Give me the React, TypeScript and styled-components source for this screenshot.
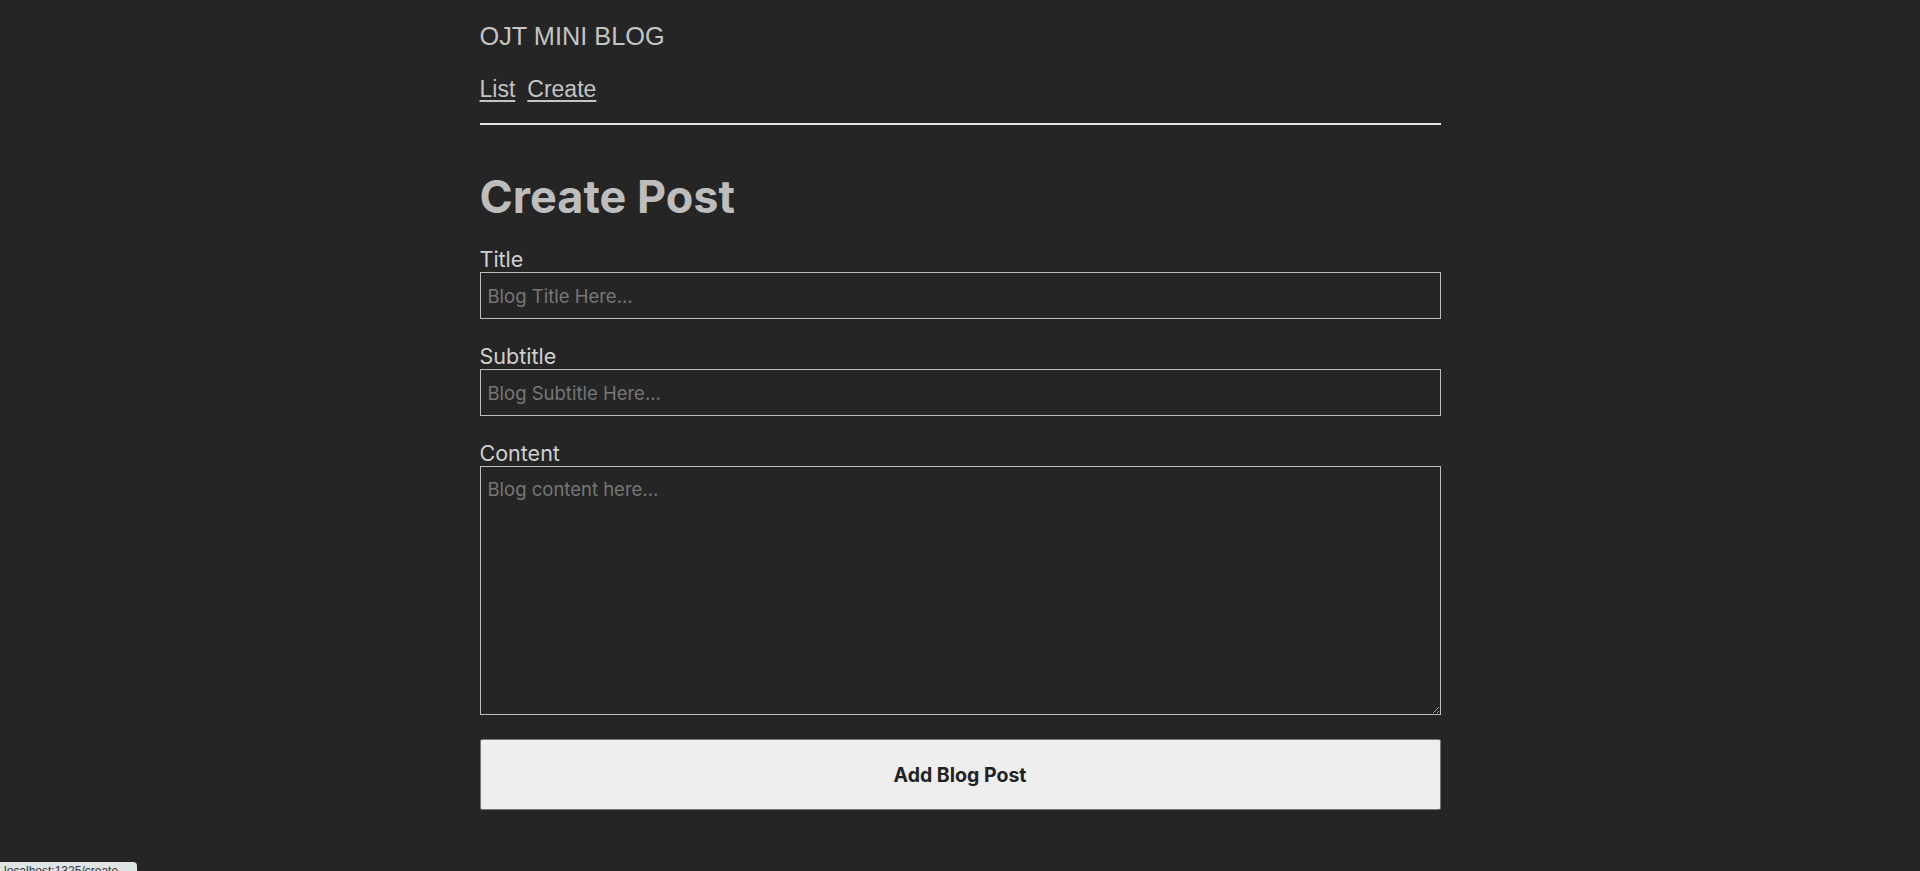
import React from 'react';
import styled, { createGlobalStyle } from 'styled-components';

const GlobalStyle = createGlobalStyle`
  html, body {
    margin: 0;
    padding: 0;
    background: #252525;
    color: #c4c4c4;
    font-family: Inter, "Liberation Sans", sans-serif;
  }
  * { box-sizing: border-box; }
`;

const Page = styled.div`
  width: 961px;
  margin: 0 auto;
  padding-top: 22px;
`;

const Header = styled.header`
  display: flex;
  flex-direction: column;
  border-bottom: 2px solid #e4e4e4;
  padding-bottom: 20px;
`;

const Brand = styled.div`
  font-family: "Liberation Sans", Arial, sans-serif;
  font-size: 25.3px;
  line-height: 29px;
  color: #c4c4c4;
`;

const Nav = styled.nav`
  display: flex;
  gap: 12px;
  margin-top: 25px;
`;

const NavLink = styled.a`
  font-family: "Liberation Sans", Arial, sans-serif;
  font-size: 23px;
  line-height: 27px;
  color: #c4c4c4;
  text-decoration: underline;
  text-underline-offset: 3px;
`;

const Heading = styled.h1`
  font-family: Inter, sans-serif;
  font-weight: 700;
  font-size: 45px;
  line-height: 54px;
  color: #bdbdbd;
  margin: 45px 0 22px;
`;

const Form = styled.form`
  display: flex;
  flex-direction: column;
`;

const Field = styled.div`
  display: flex;
  flex-direction: column;
  margin-bottom: 24px;
`;

const Label = styled.label`
  font-size: 21.5px;
  line-height: 26px;
  color: #d0d0d0;
`;

const inputBase = `
  width: 100%;
  background: transparent;
  border: 1px solid #bdbdbd;
  border-radius: 0;
  color: #d0d0d0;
  font-family: Inter, sans-serif;
  font-size: 18.5px;
  padding: 0 7px;
  outline: none;
  &::placeholder { color: #777777; }
`;

const Input = styled.input`
  ${inputBase}
  height: 47px;
`;

const TextArea = styled.textarea`
  ${inputBase}
  height: 249px;
  padding-top: 11px;
  line-height: 23px;
  resize: vertical;
  display: block;
`;

const Submit = styled.button`
  height: 71px;
  width: 100%;
  background: #eeeeee;
  border: 1px solid #767676;
  border-radius: 2px;
  color: #222222;
  font-family: Inter, sans-serif;
  font-weight: 700;
  font-size: 19.5px;
  cursor: pointer;
`;

const StatusTip = styled.div`
  position: fixed;
  left: 0;
  bottom: -10px;
  height: 19px;
  width: 137px;
  background: #dfe5e5;
  border-top-right-radius: 4px;
  font-family: "Liberation Sans", sans-serif;
  font-size: 12px;
  line-height: 19px;
  color: #333;
  padding-left: 4px;
  overflow: hidden;
  white-space: nowrap;
`;

const fields = [
  { id: 'title', label: 'Title', placeholder: 'Blog Title Here...' },
  { id: 'subtitle', label: 'Subtitle', placeholder: 'Blog Subtitle Here...' },
];

export default function App() {
  return (
    <>
      <GlobalStyle />
      <Page>
        <Header>
          <Brand>OJT MINI BLOG</Brand>
          <Nav>
            <NavLink href="#">List</NavLink>
            <NavLink href="#">Create</NavLink>
          </Nav>
        </Header>
        <Heading>Create Post</Heading>
        <Form onSubmit={(e) => e.preventDefault()}>
          {fields.map((f) => (
            <Field key={f.id}>
              <Label htmlFor={f.id}>{f.label}</Label>
              <Input id={f.id} placeholder={f.placeholder} />
            </Field>
          ))}
          <Field>
            <Label htmlFor="content">Content</Label>
            <TextArea id="content" placeholder="Blog content here..." />
          </Field>
          <Submit type="submit">Add Blog Post</Submit>
        </Form>
      </Page>
      <StatusTip>localhost:1325/create</StatusTip>
    </>
  );
}
